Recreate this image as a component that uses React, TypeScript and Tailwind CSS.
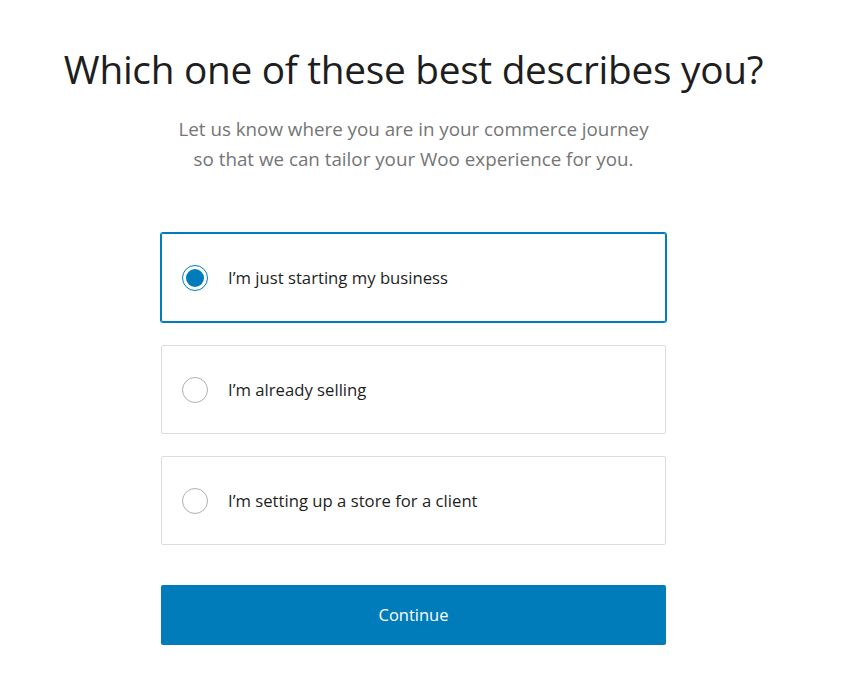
const options = [
  "I’m just starting my business",
  "I’m already selling",
  "I’m setting up a store for a client",
];

function Radio({ checked }: { checked: boolean }) {
  if (checked) {
    return (
      <span className="flex h-[26px] w-[26px] shrink-0 items-center justify-center rounded-full border border-[#007cba] bg-white">
        <span className="h-[18px] w-[18px] rounded-full bg-[#007cba]" />
      </span>
    );
  }
  return <span className="h-[26px] w-[26px] shrink-0 rounded-full border border-[#b0b0b0] bg-white" />;
}

export default function App() {
  const selected = 0;
  return (
    <div className="min-h-[689px] w-[827px] bg-white font-['Open_Sans',sans-serif]">
      <div className="flex flex-col items-center pt-[41px]">
        <h1 className="text-[38.8px] leading-[56px] text-[#1e1e1e] tracking-[-0.3px]">
          Which one of these best describes you?
        </h1>
        <p className="mt-[17px] text-center text-[18.8px] leading-[30px] text-[#757575]">
          Let us know where you are in your commerce journey
          <br />
          so that we can tailor your Woo experience for you.
        </p>

        <div className="mt-[59px] flex w-[505px] flex-col gap-[22px]">
          {options.map((label, i) => (
            <div
              key={label}
              className={
                i === selected
                  ? "mb-[1px] flex h-[89px] items-center gap-[20px] rounded-[2px] border border-[#007cba] pl-[20px] shadow-[0_0_0_1px_#007cba]"
                  : "flex h-[89px] items-center gap-[20px] rounded-[2px] border border-[#dcdcdc] pl-[20px]"
              }
            >
              <Radio checked={i === selected} />
              <span className="text-[16.7px] text-[#1e1e1e]">{label}</span>
            </div>
          ))}
        </div>

        <button className="mt-[40px] h-[60px] w-[505px] rounded-[2px] bg-[#007cba] text-[16.5px] text-white">
          Continue
        </button>
      </div>
    </div>
  );
}
